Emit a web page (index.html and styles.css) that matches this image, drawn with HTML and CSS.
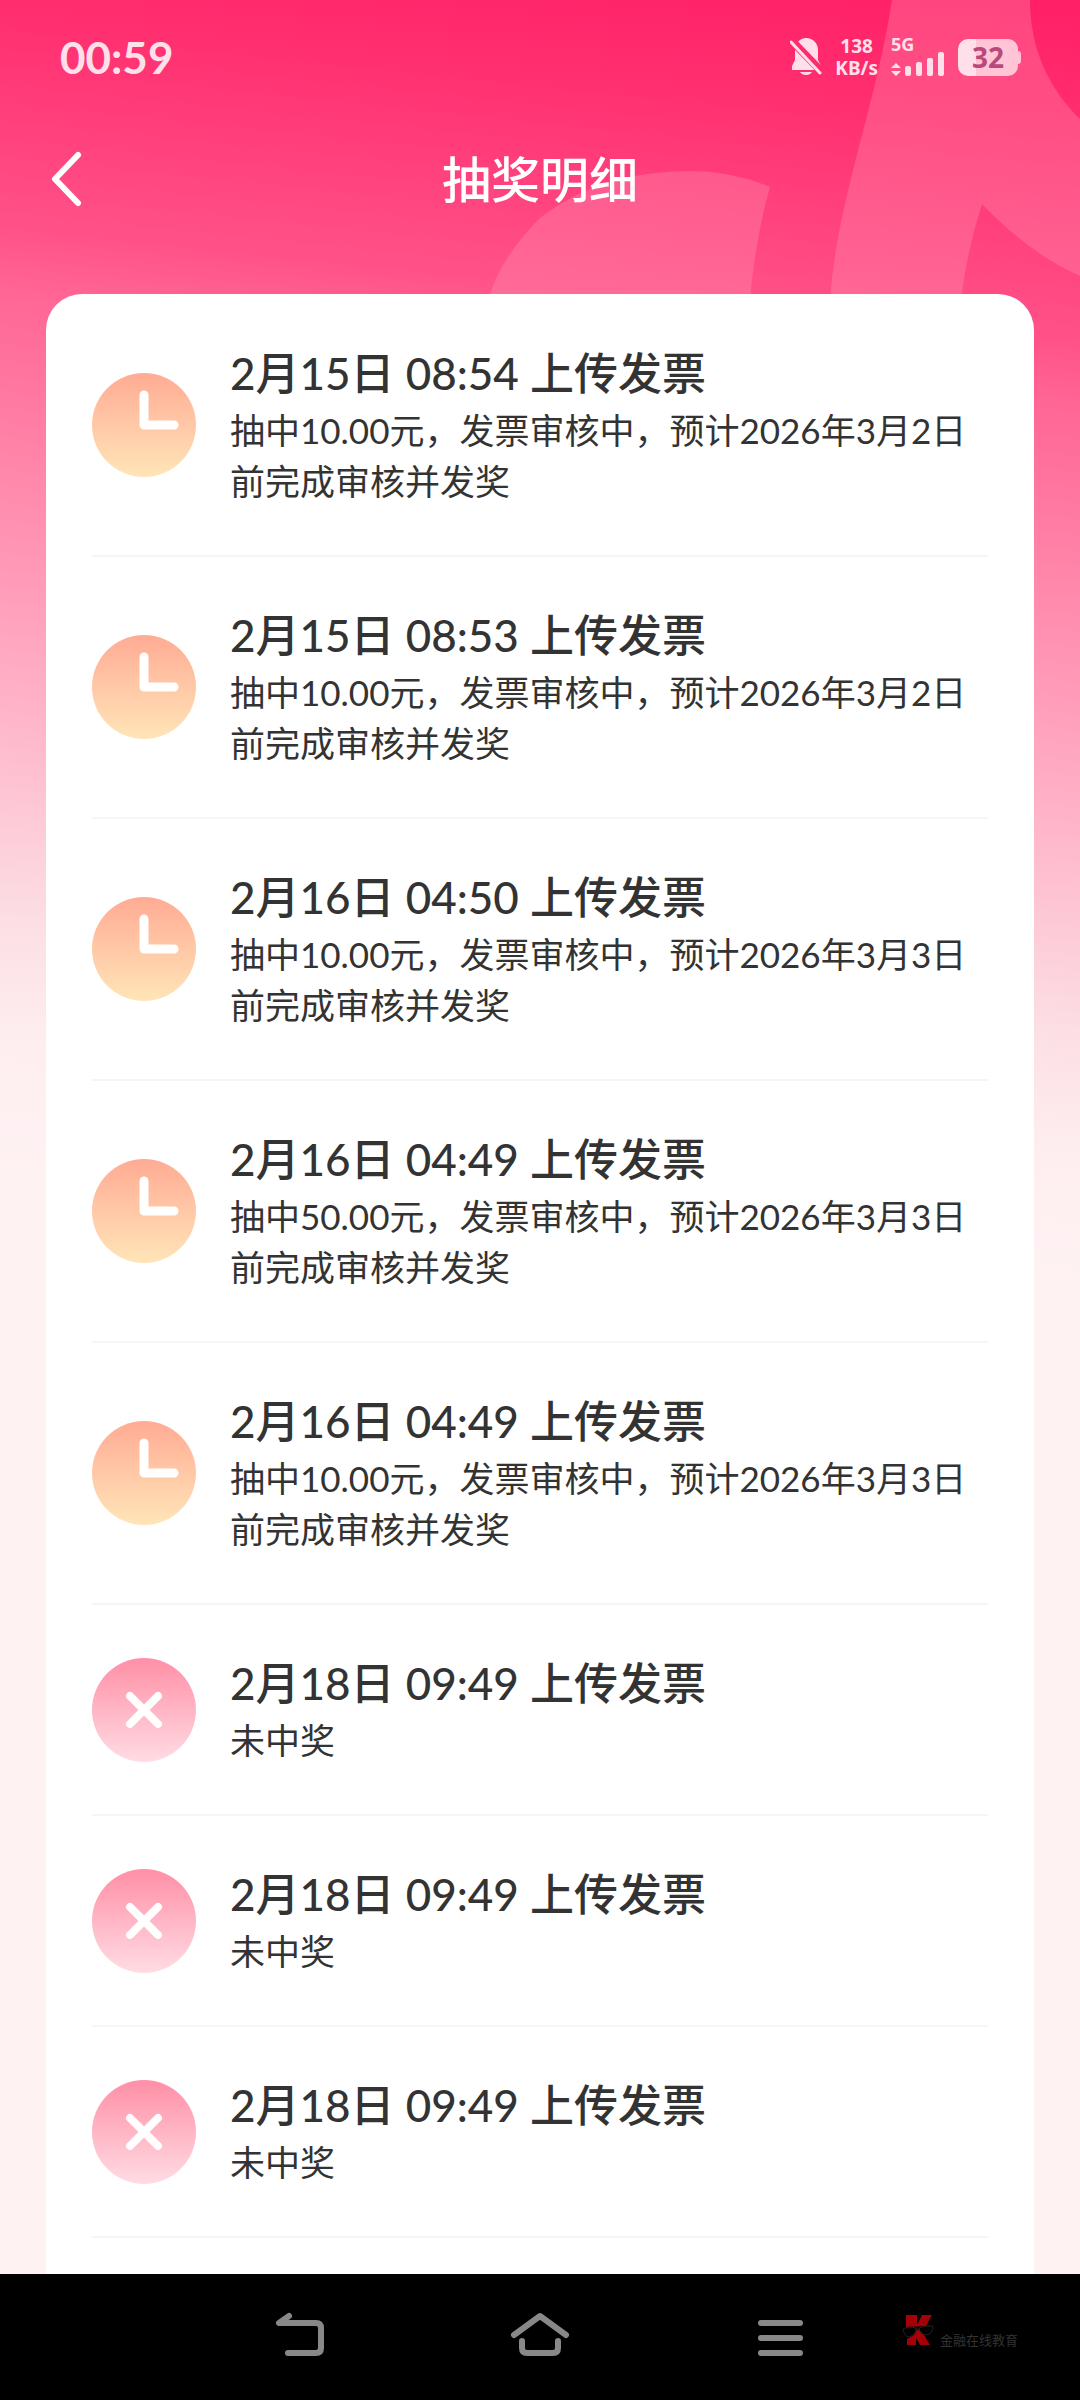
FILE: index.html
```html
<!DOCTYPE html>
<html lang="zh-CN">
<head>
<meta charset="utf-8">
<meta name="viewport" content="width=device-width, initial-scale=1">
<title>抽奖明细</title>
<link rel="stylesheet" href="styles.css">
</head>
<body>
<svg class="defs" width="0" height="0" aria-hidden="true">
  <defs>
    <linearGradient id="orange" x1="0" y1="0" x2="0" y2="1"><stop offset="0" stop-color="#ffab94"/><stop offset="1" stop-color="#ffe5b8"/></linearGradient>
    <linearGradient id="pink" x1="0" y1="0" x2="0" y2="1"><stop offset="0" stop-color="#ff8fa6"/><stop offset="1" stop-color="#ffdce4"/></linearGradient>
    <symbol id="clock" viewBox="0 0 104 104"><circle cx="52" cy="52" r="52" fill="url(#orange)"/><path d="M52 22v30h30" fill="none" stroke="#fff" stroke-width="9" stroke-linecap="round" stroke-linejoin="round"/></symbol>
    <symbol id="cross" viewBox="0 0 104 104"><circle cx="52" cy="52" r="52" fill="url(#pink)"/><path d="M38 38l28 28M66 38L38 66" fill="none" stroke="#fff" stroke-width="8" stroke-linecap="round"/></symbol>
  </defs>
</svg>
<div class="screen">
  <svg class="backdrop" viewBox="0 0 600 300" aria-hidden="true">
    <path d="M8 300Q20 258 60 218Q120 171 211 171Q252 171 290 187Q275 240 270 300Z"/>
    <path d="M412 0H550C550 50 570 90 600 119V276Q550 254 502 204Q487 250 481 300H350C357 200 395 110 412 0Z"/>
  </svg>
  <div class="status">
    <time class="clock-time">00:59</time>
    <div class="status-icons">
      <svg width="32" height="40" viewBox="0 0 32 40" aria-hidden="true">
        <path d="M16 1C23 1 28 6 28 13V23L31 29V33H2V29L5 23V13C5 6 10 1 16 1Z"/>
        <path d="M10 35H22Q20 38 16 38Q12 38 10 35Z"/>
        <path d="M0 2L34 37" fill="none" stroke="#ff2b6d" stroke-width="8"/>
        <path d="M1 5L30 36" fill="none" stroke="#ffe0ea" stroke-width="3" stroke-linecap="round"/>
      </svg>
      <div class="speed"><span>138</span><span>KB/s</span></div>
      <div class="network">
        <span>5G</span>
        <svg width="54" height="26" viewBox="0 0 54 26" aria-hidden="true">
          <path d="M5 12L10 17H0ZM5 25L10 20H0Z"/>
          <rect x="14" y="15" width="6" height="10" rx="2"/><rect x="25" y="11" width="6" height="14" rx="2"/><rect x="36" y="7" width="6" height="18" rx="2"/><rect x="47" y="1" width="6" height="24" rx="2"/>
        </svg>
      </div>
      <div class="battery">32</div>
    </div>
  </div>
  <header class="header">
    <button class="back" type="button" aria-label="返回"><svg width="32" height="56" viewBox="0 0 32 56" aria-hidden="true"><path d="M28 4L5 28L28 52"/></svg></button>
    <h1>抽奖明细</h1>
  </header>
  <main class="card">
    <ul class="list">
      <li><svg class="icon"><use href="#clock"/></svg><div><h2>2月15日 08:54 上传发票</h2><p>抽中10.00元，发票审核中，预计2026年3月2日前完成审核并发奖</p></div></li>
      <li><svg class="icon"><use href="#clock"/></svg><div><h2>2月15日 08:53 上传发票</h2><p>抽中10.00元，发票审核中，预计2026年3月2日前完成审核并发奖</p></div></li>
      <li><svg class="icon"><use href="#clock"/></svg><div><h2>2月16日 04:50 上传发票</h2><p>抽中10.00元，发票审核中，预计2026年3月3日前完成审核并发奖</p></div></li>
      <li><svg class="icon"><use href="#clock"/></svg><div><h2>2月16日 04:49 上传发票</h2><p>抽中50.00元，发票审核中，预计2026年3月3日前完成审核并发奖</p></div></li>
      <li><svg class="icon"><use href="#clock"/></svg><div><h2>2月16日 04:49 上传发票</h2><p>抽中10.00元，发票审核中，预计2026年3月3日前完成审核并发奖</p></div></li>
      <li><svg class="icon"><use href="#cross"/></svg><div><h2>2月18日 09:49 上传发票</h2><p>未中奖</p></div></li>
      <li><svg class="icon"><use href="#cross"/></svg><div><h2>2月18日 09:49 上传发票</h2><p>未中奖</p></div></li>
      <li><svg class="icon"><use href="#cross"/></svg><div><h2>2月18日 09:49 上传发票</h2><p>未中奖</p></div></li>
    </ul>
  </main>
  <nav class="navbar" aria-label="系统导航">
    <button type="button" aria-label="返回"><svg width="56" height="60" viewBox="0 0 56 60" aria-hidden="true"><path d="M17 11L7 18H44Q49 18 49 23V43Q49 48 44 48H16"/></svg></button>
    <button type="button" aria-label="主页"><svg width="60" height="60" viewBox="0 0 60 60" aria-hidden="true"><path d="M4 30L30 11L56 30M12 36V43Q12 48 17 48H43Q48 48 48 43V36"/></svg></button>
    <button type="button" aria-label="最近任务"><svg width="56" height="60" viewBox="0 0 56 60" aria-hidden="true"><path d="M9 18H48M9 33H48M9 48H48"/></svg></button>
    <div class="mark">
      <svg width="32" height="36" viewBox="0 0 32 36" aria-hidden="true">
        <path d="M4 2H15V12L20 2H30L24 13L4 14ZM15 17L19 17L28 32H18L14 25V32H5V26L12 22Z" fill="#a30008"/>
        <path d="M1 16Q6 13 14 15Q14 22 7 24Q2 23 1 16ZM17 15Q24 12 31 13Q31 21 24 22Q18 21 17 15ZM13 16H18" fill="#000" stroke="#222"/>
      </svg>
      <span>金融在线教育</span>
    </div>
  </nav>
</div>
</body>
</html>
```
FILE: styles.css
```css
* { box-sizing: border-box; }
body, h1, h2, p, ul { margin: 0; padding: 0; }
body {
  font-family: Lato, "Noto Sans CJK SC", sans-serif;
  color: #333;
  background: #fff2f3;
}
button { padding: 0; border: 0; background: none; cursor: pointer; }
svg { display: block; }
.defs { position: absolute; }

.screen {
  position: relative;
  display: flex;
  flex-direction: column;
  min-height: 100vh;
  background: linear-gradient(186deg, #ff1f66 0, #ff2f70 130px, #ff5289 340px, #ff6696 403px, #ff709c 460px, #ff88ab 585px, #ff9dba 700px, #ffb6cb 830px, #fdcdd9 940px, #fcdfe5 1030px, #feeef0 1150px, #fff2f3 1280px);
}
/* large translucent letterforms behind the header */
.backdrop {
  position: absolute;
  top: 0;
  right: 0;
  width: 600px;
  height: 300px;
  fill: rgba(255, 165, 190, .28);
}

.status {
  position: relative;
  display: flex;
  justify-content: space-between;
  align-items: center;
  height: 116px;
  padding: 0 62px 2px 60px;
  color: #ffe0ea;
  fill: #ffe0ea;
}
.clock-time { font-size: 44px; font-weight: 700; }
.status-icons { display: flex; align-items: center; gap: 13px; }
.speed {
  display: flex;
  flex-direction: column;
  align-items: center;
  font: 700 19px/22px "Noto Sans", sans-serif;
}
.network { font: 700 18px/14px "Noto Sans", sans-serif; }
.network span { display: block; }
.battery {
  position: relative;
  width: 60px;
  border-radius: 10px;
  background: linear-gradient(90deg, #ffe0ea 18px, #ffc4d6 18px);
  color: #b9497a;
  font: 700 28px/37px "Noto Sans", sans-serif;
  text-align: center;
}
.battery::after {
  content: "";
  position: absolute;
  left: 60px;
  top: 12px;
  width: 3px;
  height: 13px;
  border-radius: 0 3px 3px 0;
  background: #ffc4d6;
}

.header {
  position: relative;
  display: grid;
  grid-template-columns: 56px 1fr 56px;
  align-items: center;
  height: 178px;
  padding: 0 50px 52px;
}
.back svg { fill: none; stroke: #fff; stroke-width: 6; stroke-linecap: round; stroke-linejoin: round; }
.header h1 { color: #fff; font-size: 49px; font-weight: 500; line-height: 64px; text-align: center; }

.card {
  position: relative;
  flex: 1;
  margin: 0 46px;
  padding: 1px 46px 0;
  border-radius: 36px 36px 0 0;
  background: #fff;
}
.list { list-style: none; }
.list li {
  display: flex;
  align-items: center;
  gap: 34px;
  padding: 48px 0;
  border-bottom: 2px solid #f5f5f5;
}
.icon { flex: none; width: 104px; height: 104px; }
.list h2 { margin-bottom: 2px; font-size: 44px; font-weight: 500; line-height: 60px; }
.list p { font-size: 35px; line-height: 51px; }

.navbar {
  position: relative;
  display: grid;
  grid-template-columns: repeat(3, 240px) 1fr;
  align-items: center;
  height: 126px;
  padding: 0 0 4px 180px;
  background: #000;
}
.navbar button { width: 240px; display: grid; justify-content: center; }
.navbar button svg { fill: none; stroke: #888; stroke-width: 6; stroke-linecap: round; stroke-linejoin: round; }
.mark {
  display: flex;
  align-items: flex-end;
  gap: 6px;
  padding: 0 0 8px 2px;
  color: #333;
  font-size: 13px;
  line-height: 18px;
  white-space: nowrap;
}
```
